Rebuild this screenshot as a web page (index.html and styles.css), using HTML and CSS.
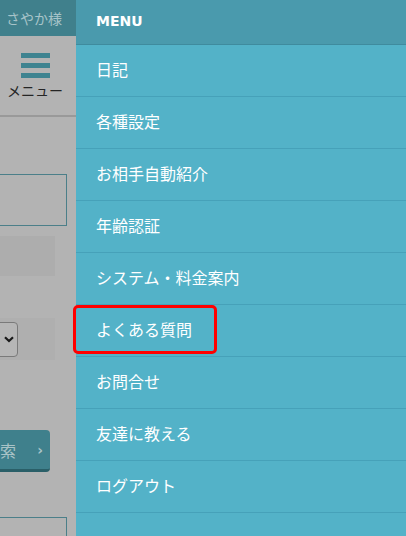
FILE: index.html
```html
<!DOCTYPE html>
<html lang="ja">
<head>
<meta charset="utf-8">
<title>MENU</title>
<link rel="stylesheet" href="styles.css">
</head>
<body>
<div class="screen">
  <div class="page">
    <div class="topbar">さやか様</div>
    <div class="menubtn">
      <div class="burger"><span></span><span></span><span></span></div>
      <div class="menulabel">メニュー</div>
    </div>
    <div class="field field-top"></div>
    <div class="block"></div>
    <div class="selectrow">
      <div class="select">
        <svg class="chev" width="10" height="7" viewBox="0 0 10 7"><path d="M1 1.2 L5 5 L9 1.2" fill="none" stroke="#1a1a1a" stroke-width="2.2"/></svg>
      </div>
    </div>
    <div class="btn"><span class="btntext">索</span><span class="btnarrow">›</span></div>
    <div class="field field-bottom"></div>
  </div>
  <nav class="panel">
    <div class="panel-head">MENU</div>
    <ul class="menu">
      <li class="item">日記</li>
      <li class="item">各種設定</li>
      <li class="item">お相手自動紹介</li>
      <li class="item">年齢認証</li>
      <li class="item">システム・料金案内</li>
      <li class="item item-marked">よくある質問<span class="mark"></span></li>
      <li class="item">お問合せ</li>
      <li class="item">友達に教える</li>
      <li class="item">ログアウト</li>
    </ul>
  </nav>
</div>
</body>
</html>
```

FILE: styles.css
```css
* { box-sizing: border-box; }
html, body { margin: 0; padding: 0; }
body {
  width: 406px;
  height: 536px;
  overflow: hidden;
  background: #b3b3b3;
  font-family: "Noto Sans CJK JP", "Noto Sans", sans-serif;
}
.screen {
  display: flex;
  height: 536px;
}
.page {
  width: 76px;
  flex: none;
  overflow: hidden;
  background: #b3b3b3;
}
.topbar {
  height: 36px;
  background: #40808c;
  color: #a7c4c9;
  font-size: 14px;
  line-height: 36px;
  padding-left: 6px;
  white-space: nowrap;
}
.menubtn {
  height: 81px;
  border-bottom: 2px solid #999;
  display: flex;
  flex-direction: column;
  align-items: center;
  padding-top: 17px;
  width: 76px;
}
.burger {
  width: 29px;
  margin-left: -6px;
  display: flex;
  flex-direction: column;
  gap: 5px;
}
.burger span {
  display: block;
  height: 5px;
  background: #3e8390;
}
.menulabel {
  margin-top: 2px;
  margin-left: -6px;
  font-size: 14px;
  line-height: 20px;
  color: #252525;
  white-space: nowrap;
}
.field {
  width: 70px;
  margin-left: -3px;
  border: 1px solid #4b7f89;
}
.field-top {
  margin-top: 57px;
  height: 52px;
}
.block {
  margin-top: 10px;
  width: 55px;
  height: 40px;
  background: #adadad;
}
.selectrow {
  margin-top: 42px;
  width: 55px;
  height: 42px;
  background: #afafaf;
  padding-top: 4px;
}
.select {
  width: 28px;
  margin-left: -10px;
  height: 35px;
  border: 1px solid #7a7a7a;
  border-radius: 4px;
  background: #b6b6b6;
  display: flex;
  align-items: center;
  justify-content: flex-end;
  padding-right: 3px;
}
.btn {
  margin-top: 70px;
  margin-left: -10px;
  width: 60px;
  height: 42px;
  background: #3f808c;
  border-bottom: 3px solid #2a5f68;
  border-radius: 4px;
  display: flex;
  align-items: center;
  justify-content: space-between;
  padding: 0 7px 0 10px;
  color: #a9c3c7;
  font-size: 16px;
}
.btnarrow {
  font-family: "DejaVu Sans", sans-serif;
  font-weight: bold;
  font-size: 14px;
}
.field-bottom {
  margin-top: 45px;
  height: 40px;
}
.panel {
  flex: 1;
  background: #53b2c8;
}
.panel-head {
  height: 45px;
  background: #4a9aad;
  border-bottom: 1px solid #3f8b9e;
  color: #fff;
  font-family: "DejaVu Sans", Verdana, sans-serif;
  font-weight: bold;
  font-size: 14px;
  line-height: 42px;
  padding-left: 20px;
}
.menu {
  list-style: none;
  margin: 0;
  padding: 0;
}
.item {
  position: relative;
  height: 52px;
  border-bottom: 1px solid #46a1b9;
  color: #fff;
  font-size: 16px;
  line-height: 48px;
  padding-left: 20px;
}
.mark {
  position: absolute;
  left: -3px;
  top: 0;
  width: 144px;
  height: 49px;
  border: 3px solid #ff0000;
  border-radius: 5px;
}
```
